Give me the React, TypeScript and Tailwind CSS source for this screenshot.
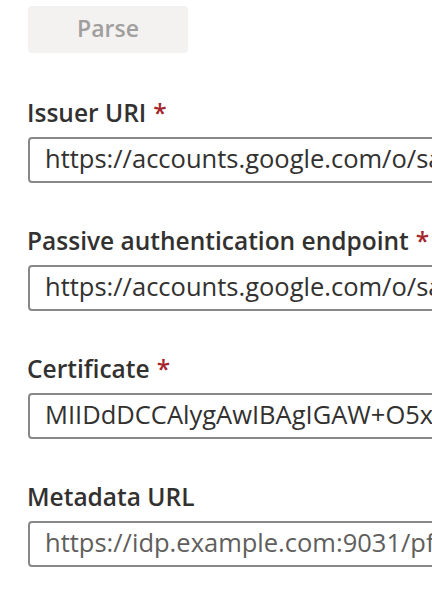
export default function App() {
  const fields = [
    { label: "Issuer URI", required: true, value: "https://accounts.google.com/o/saml2?idpid=C01abcd", placeholder: false },
    { label: "Passive authentication endpoint", required: true, value: "https://accounts.google.com/o/saml2/idp?idpid=C01abcd", placeholder: false },
    { label: "Certificate", required: true, value: "MIIDdDCCAlygAwIBAgIGAW+O5xKQMA0GCSqGSIb3DQEBCwUA", placeholder: false },
    { label: "Metadata URL", required: false, value: "https://idp.example.com:9031/pf/federation_metadata", placeholder: true },
  ];
  return (
    <div className="w-[432px] h-[598px] overflow-hidden bg-white pl-[28px] pt-[6px]" style={{ fontFamily: '"Open Sans", "Noto Sans", sans-serif' }}>
      <button className="w-[160px] h-[47px] rounded-[4px] bg-[#f3f2f1] text-[#a19f9d] text-[23px] font-semibold leading-none pb-[2px]">
        Parse
      </button>
      <div className="flex flex-col gap-[42px] mt-[44px]">
        {fields.map((f) => (
          <div key={f.label} className="flex flex-col">
            <label className="-ml-[1px] text-[24.5px] font-semibold text-[#323130] leading-[32px] whitespace-nowrap">
              {f.label}
              {f.required && <span className="text-[#a4262c] ml-[7px]">*</span>}
            </label>
            <div className="mt-[8px] w-[440px] h-[46px] border-[2px] border-[#8a8886] rounded-[4px] flex items-center pl-[15px] pb-[3px] overflow-hidden">
              <span className={`text-[25.5px] whitespace-nowrap ${f.placeholder ? "text-[#605e5c]" : "text-[#323130]"}`}>
                {f.value}
              </span>
            </div>
          </div>
        ))}
      </div>
    </div>
  );
}
